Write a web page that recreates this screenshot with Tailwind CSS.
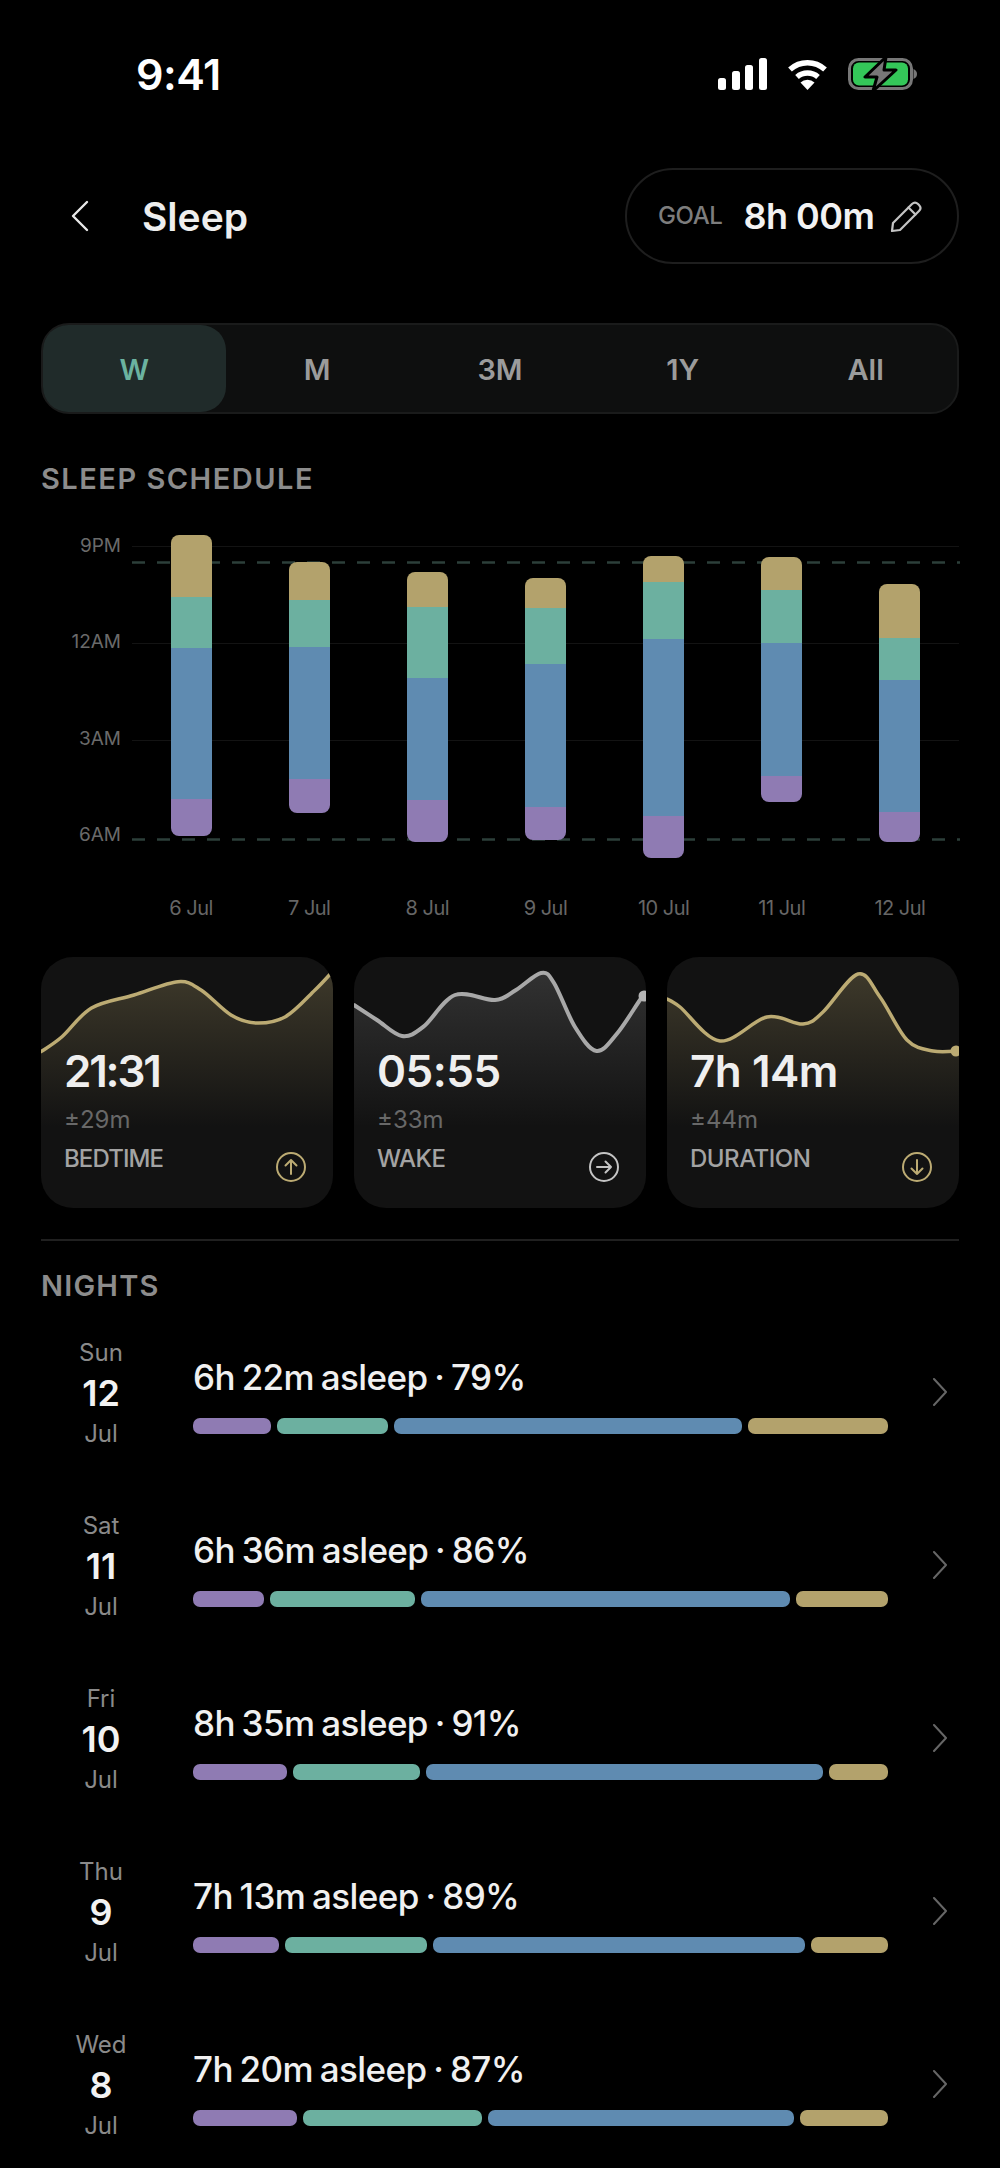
<!DOCTYPE html>
<html>
<head>
<meta charset="utf-8">
<script src="https://cdn.jsdelivr.net/npm/@tailwindcss/browser@4"></script>
</head>
<body class="bg-black">
<div class="w-[1000px] h-[2168px] overflow-hidden bg-black text-[#f0f0f0] font-['Inter',sans-serif]">

  <!-- status bar -->
  <div class="h-[148px] flex items-center justify-between pl-[136px] pr-[83px]">
    <span class="text-[43px] font-semibold leading-none text-white tracking-[-0.5px]">9:41</span>
    <div class="flex items-center gap-[20px]">
      <svg width="49" height="32" viewBox="0 0 49 32" fill="#fff"><rect x="0" y="20" width="8" height="12" rx="2.5"/><rect x="14" y="13" width="8" height="19" rx="2.5"/><rect x="27" y="7" width="8" height="25" rx="2.5"/><rect x="41" y="0" width="8" height="32" rx="2.5"/></svg>
      <svg width="41" height="32" viewBox="0 0 41 32" fill="none" stroke="#fff" stroke-linecap="butt"><path d="M3 11.5A26 26 0 0 1 38 11.5" stroke-width="5.5"/><path d="M10 19A16 16 0 0 1 31 19" stroke-width="5.5"/><path d="M13.5 24.5A10 10 0 0 1 27.5 24.5L20.5 32Z" fill="#fff" stroke="none"/></svg>
      <svg width="69" height="36" viewBox="0 0 69 36" fill="none"><rect x="1.5" y="3.5" width="62" height="29" rx="9" stroke="#777" stroke-width="3"/><rect x="5" y="6.5" width="55" height="23" rx="6" fill="#34c759"/><path d="M65.5 13C68 14 69 16 69 18S68 22 65.500 23Z" fill="#777"/><path d="M38 1 17 21H29L25 35 48 14H36Z" fill="#777" stroke="#000" stroke-width="3" stroke-linejoin="round"/></svg>
    </div>
  </div>

  <div class="px-[41px]">
    <!-- header -->
    <div class="mt-[20px] h-[96px] flex items-center justify-between">
      <div class="flex items-center">
        <svg class="ml-[29px]" width="20" height="32" viewBox="0 0 20 32" fill="none" stroke="#e8e8e8" stroke-width="2.4" stroke-linecap="round" stroke-linejoin="round"><path d="M17 2 3 16 17 30"/></svg>
        <span class="ml-[52px] text-[39px] font-semibold leading-none text-[#eeeeee]">Sleep</span>
      </div>
      <div class="w-[334px] h-[96px] rounded-full border-2 border-[#1e1e1e] flex items-center pl-[31px]">
        <span class="text-[24px] font-medium text-[#7d7d7d] tracking-[-0.4px] leading-none">GOAL</span>
        <span class="ml-[21px] text-[36px] font-semibold text-[#f2f2f2] leading-none tracking-[-0.5px]">8h 00m</span>
        <svg class="ml-[15px]" width="33" height="33" viewBox="0 0 33 33" fill="none" stroke="#c4c4c4" stroke-width="2.2" stroke-linejoin="round" stroke-linecap="round"><path d="M3 23 22 4Q25 1 28 4L29 5Q32 8 29 11L10 30 2 31Z"/><path d="M18.500 7.500 25.500 14.500"/></svg>
      </div>
    </div>

    <!-- range tabs -->
    <div class="mt-[59px] h-[91px] rounded-[28px] border-2 border-[#1a1b1b] bg-[#0e0f0f] grid grid-cols-5 items-stretch text-[29px] font-semibold text-[#9b9b9b]">
      <div class="rounded-[25px] bg-[#202b2a] text-[#6bb3a0] flex items-center justify-center pt-[2px]">W</div>
      <div class="flex items-center justify-center pt-[2px]">M</div>
      <div class="flex items-center justify-center pt-[2px]">3M</div>
      <div class="flex items-center justify-center pt-[2px]">1Y</div>
      <div class="flex items-center justify-center pt-[2px]">All</div>
    </div>

    <!-- schedule -->
    <div class="mt-[47px] h-[34px] flex items-center text-[29px] font-semibold tracking-[1.5px] text-[#8c8c8c] leading-none">SLEEP SCHEDULE</div>

    <div class="relative mt-[35px] h-[340px] pl-[91px]">
      <div class="absolute left-0 top-[6px] w-[80px] text-right text-[19px] leading-[20px] text-[#6a6a6a]">9PM</div>
      <div class="absolute left-0 top-[102px] w-[80px] text-right text-[19px] leading-[20px] text-[#6a6a6a]">12AM</div>
      <div class="absolute left-0 top-[199px] w-[80px] text-right text-[19px] leading-[20px] text-[#6a6a6a]">3AM</div>
      <div class="absolute left-0 top-[295px] w-[80px] text-right text-[19px] leading-[20px] text-[#6a6a6a]">6AM</div>

      <div class="absolute left-[91px] right-0 top-[16px] h-[1px] bg-[#131313]"></div>
      <div class="absolute left-[91px] right-0 top-[113px] h-[1px] bg-[#131313]"></div>
      <div class="absolute left-[91px] right-0 top-[210px] h-[1px] bg-[#131313]"></div>
      <svg class="absolute left-[91px] top-[31px]" width="828" height="3"><line x1="0" y1="1.500" x2="828" y2="1.500" stroke="#2c3f3a" stroke-width="2.500" stroke-dasharray="13 12"/></svg>
      <svg class="absolute left-[91px] top-[308px]" width="828" height="3"><line x1="0" y1="1.500" x2="828" y2="1.500" stroke="#2c3f3a" stroke-width="2.500" stroke-dasharray="13 12"/></svg>

      <div class="relative grid grid-cols-7 h-full">
        <div class="flex justify-center"><div class="w-[41px] self-start rounded-[8px] overflow-hidden flex flex-col" style="margin-top:5.3px"><div class="bg-[#b3a26c]" style="height:61.7px"></div><div class="bg-[#6cb0a0]" style="height:51.3px"></div><div class="bg-[#5f8bb1]" style="height:150.4px"></div><div class="bg-[#8f7bb3]" style="height:37px"></div></div></div>
        <div class="flex justify-center"><div class="w-[41px] self-start rounded-[8px] overflow-hidden flex flex-col" style="margin-top:31.7px"><div class="bg-[#b3a26c]" style="height:38.3px"></div><div class="bg-[#6cb0a0]" style="height:46.7px"></div><div class="bg-[#5f8bb1]" style="height:132.6px"></div><div class="bg-[#8f7bb3]" style="height:34px"></div></div></div>
        <div class="flex justify-center"><div class="w-[41px] self-start rounded-[8px] overflow-hidden flex flex-col" style="margin-top:41.7px"><div class="bg-[#b3a26c]" style="height:35px"></div><div class="bg-[#6cb0a0]" style="height:71.3px"></div><div class="bg-[#5f8bb1]" style="height:122px"></div><div class="bg-[#8f7bb3]" style="height:41.7px"></div></div></div>
        <div class="flex justify-center"><div class="w-[41px] self-start rounded-[8px] overflow-hidden flex flex-col" style="margin-top:48.3px"><div class="bg-[#b3a26c]" style="height:30px"></div><div class="bg-[#6cb0a0]" style="height:55.4px"></div><div class="bg-[#5f8bb1]" style="height:143.3px"></div><div class="bg-[#8f7bb3]" style="height:32.7px"></div></div></div>
        <div class="flex justify-center"><div class="w-[41px] self-start rounded-[8px] overflow-hidden flex flex-col" style="margin-top:25.7px"><div class="bg-[#b3a26c]" style="height:26.3px"></div><div class="bg-[#6cb0a0]" style="height:57px"></div><div class="bg-[#5f8bb1]" style="height:177px"></div><div class="bg-[#8f7bb3]" style="height:42px"></div></div></div>
        <div class="flex justify-center"><div class="w-[41px] self-start rounded-[8px] overflow-hidden flex flex-col" style="margin-top:27px"><div class="bg-[#b3a26c]" style="height:33.3px"></div><div class="bg-[#6cb0a0]" style="height:52.7px"></div><div class="bg-[#5f8bb1]" style="height:133px"></div><div class="bg-[#8f7bb3]" style="height:26px"></div></div></div>
        <div class="flex justify-center"><div class="w-[41px] self-start rounded-[8px] overflow-hidden flex flex-col" style="margin-top:54.3px"><div class="bg-[#b3a26c]" style="height:53.7px"></div><div class="bg-[#6cb0a0]" style="height:42px"></div><div class="bg-[#5f8bb1]" style="height:132.3px"></div><div class="bg-[#8f7bb3]" style="height:30px"></div></div></div>
      </div>
    </div>
    <div class="mt-[26px] ml-[91px] grid grid-cols-7 text-center text-[20px] leading-[24px] text-[#666666] tracking-[-0.5px]">
      <div>6 Jul</div><div>7 Jul</div><div>8 Jul</div><div>9 Jul</div><div>10 Jul</div><div>11 Jul</div><div>12 Jul</div>
    </div>

    <!-- stat cards -->
    <div class="mt-[37px] grid grid-cols-3 gap-[21px]">
      <div class="relative h-[251px] rounded-[32px] overflow-hidden bg-[#121212]">
        <svg class="absolute left-0 top-0" width="292" height="251" viewBox="0 0 292 251" fill="none">
          <defs><linearGradient id="g1" x1="0" y1="0" x2="0" y2="1"><stop offset="0" stop-color="#b3a26c" stop-opacity="0.27"/><stop offset="1" stop-color="#b3a26c" stop-opacity="0"/></linearGradient></defs>
          <path data-pts="0,94.700 21,79.700 50.500,51 93,38 137,24.700 160,33 190,58 215,66 244.500,59.700 274,33 292,14" data-fill="1" fill="url(#g1)"/>
          <path data-pts="0,94.700 21,79.700 50.500,51 93,38 137,24.700 160,33 190,58 215,66 244.500,59.700 274,33 292,14" stroke="#bcab73" stroke-width="3.500" stroke-linecap="round"/>
        </svg>
        <div class="relative pl-[23px] pt-[90px]">
          <div class="text-[44px] leading-[48px] font-semibold text-[#efefef] tracking-[-2.2px]">21:31</div>
          <div class="mt-[11px] text-[24px] leading-[28px] text-[#686868]">±29m</div>
          <div class="mt-[11px] text-[24px] leading-[28px] font-medium text-[#a3a3a3] tracking-[-0.9px]">BEDTIME</div>
        </div>
        <svg class="absolute right-[27px] top-[195px]" width="30" height="30" viewBox="0 0 30 30" fill="none" stroke="#bcab73" stroke-width="2" stroke-linecap="round" stroke-linejoin="round"><circle cx="15" cy="15" r="14"/><path d="M15 22V8M9.500 13.500 15 8l5.500 5.500"/></svg>
      </div>

      <div class="relative h-[251px] rounded-[32px] overflow-hidden bg-[#121212]">
        <svg class="absolute left-0 top-0" width="292" height="251" viewBox="0 0 292 251" fill="none">
          <defs><linearGradient id="g2" x1="0" y1="0" x2="0" y2="1"><stop offset="0" stop-color="#b0b0b0" stop-opacity="0.2"/><stop offset="1" stop-color="#b0b0b0" stop-opacity="0"/></linearGradient></defs>
          <path data-pts="0,48 23,63 48,79 69.500,69.700 101,38 141,43 162,33 187,16 200,26 221,70 242.500,94 263.500,76 288,40 292,38" data-fill="1" fill="url(#g2)"/>
          <path data-pts="0,48 23,63 48,79 69.500,69.700 101,38 141,43 162,33 187,16 200,26 221,70 242.500,94 263.500,76 288,40 292,38" stroke="#a8a8a8" stroke-width="4" stroke-linecap="round"/>
          <circle cx="290" cy="39" r="5.500" fill="#b4b4b4"/>
        </svg>
        <div class="relative pl-[23px] pt-[90px]">
          <div class="text-[44px] leading-[48px] font-semibold text-[#efefef] tracking-[-0.5px]">05:55</div>
          <div class="mt-[11px] text-[24px] leading-[28px] text-[#686868]">±33m</div>
          <div class="mt-[11px] text-[24px] leading-[28px] font-medium text-[#a3a3a3] tracking-[-0.5px]">WAKE</div>
        </div>
        <svg class="absolute right-[27px] top-[195px]" width="30" height="30" viewBox="0 0 30 30" fill="none" stroke="#c4c4c4" stroke-width="2" stroke-linecap="round" stroke-linejoin="round"><circle cx="15" cy="15" r="14"/><path d="M8 15H22M16.500 9.500 22 15l-5.500 5.500"/></svg>
      </div>

      <div class="relative h-[251px] rounded-[32px] overflow-hidden bg-[#121212]">
        <svg class="absolute left-0 top-0" width="292" height="251" viewBox="0 0 292 251" fill="none">
          <defs><linearGradient id="g3" x1="0" y1="0" x2="0" y2="1"><stop offset="0" stop-color="#b3a26c" stop-opacity="0.27"/><stop offset="1" stop-color="#b3a26c" stop-opacity="0"/></linearGradient></defs>
          <path data-pts="0,42 13,50 53,84 100,60 136,67 156,55 191,17 213,40 240,83 266,94 292,94" data-fill="1" fill="url(#g3)"/>
          <path data-pts="0,42 13,50 53,84 100,60 136,67 156,55 191,17 213,40 240,83 266,94 292,94" stroke="#bcab73" stroke-width="3.500" stroke-linecap="round"/>
          <circle cx="289" cy="94" r="5.500" fill="#bcab73"/>
        </svg>
        <div class="relative pl-[23px] pt-[90px]">
          <div class="text-[44px] leading-[48px] font-semibold text-[#efefef] tracking-[-0.5px]">7h 14m</div>
          <div class="mt-[11px] text-[24px] leading-[28px] text-[#686868]">±44m</div>
          <div class="mt-[11px] text-[24px] leading-[28px] font-medium text-[#a3a3a3] tracking-[-0.5px]">DURATION</div>
        </div>
        <svg class="absolute right-[27px] top-[195px]" width="30" height="30" viewBox="0 0 30 30" fill="none" stroke="#bcab73" stroke-width="2" stroke-linecap="round" stroke-linejoin="round"><circle cx="15" cy="15" r="14"/><path d="M15 8V22M9.500 16.500 15 22l5.500-5.500"/></svg>
      </div>
    </div>

    <div class="mt-[31px] h-[2px] bg-[#202020]"></div>

    <div class="mt-[30px] h-[28px] flex items-center text-[29px] font-semibold tracking-[1.2px] text-[#8c8c8c] leading-none">NIGHTS</div>

    <!-- nights -->
    <div class="mt-[41px] flex flex-col">
      <div class="h-[173px] flex items-start">
        <div class="w-[120px] text-center"><div class="text-[24px] leading-[28px] text-[#8a8a8a] -mt-[1px]">Sun</div><div class="mt-[6px] text-[36px] leading-[40px] font-semibold text-[#f2f2f2]">12</div><div class="mt-[7px] text-[24px] leading-[28px] text-[#8a8a8a]">Jul</div></div>
        <div class="ml-[32px] w-[695px] pt-[17px]"><div class="text-[35px] leading-[40px] font-medium text-[#f0f0f0] tracking-[-0.6px] [word-spacing:-2px]">6h 22m asleep · 79%</div><div class="mt-[21px] flex gap-[6px] h-[16px]"><div class="rounded-[7px] bg-[#8f7bb3]" style="flex:78"></div><div class="rounded-[7px] bg-[#6cb0a0]" style="flex:111"></div><div class="rounded-[7px] bg-[#5f8bb1]" style="flex:348"></div><div class="rounded-[7px] bg-[#b3a26c]" style="flex:140"></div></div></div>
        <svg class="ml-[44px] mt-[38px]" width="16" height="28" viewBox="0 0 16 28" fill="none" stroke="#666666" stroke-width="2" stroke-linecap="round" stroke-linejoin="round"><path d="M2 1 14 14 2 27"/></svg>
      </div>
      <div class="h-[173px] flex items-start">
        <div class="w-[120px] text-center"><div class="text-[24px] leading-[28px] text-[#8a8a8a] -mt-[1px]">Sat</div><div class="mt-[6px] text-[36px] leading-[40px] font-semibold text-[#f2f2f2]">11</div><div class="mt-[7px] text-[24px] leading-[28px] text-[#8a8a8a]">Jul</div></div>
        <div class="ml-[32px] w-[695px] pt-[17px]"><div class="text-[35px] leading-[40px] font-medium text-[#f0f0f0] tracking-[-0.6px] [word-spacing:-2px]">6h 36m asleep · 86%</div><div class="mt-[21px] flex gap-[6px] h-[16px]"><div class="rounded-[7px] bg-[#8f7bb3]" style="flex:71"></div><div class="rounded-[7px] bg-[#6cb0a0]" style="flex:145"></div><div class="rounded-[7px] bg-[#5f8bb1]" style="flex:370"></div><div class="rounded-[7px] bg-[#b3a26c]" style="flex:92"></div></div></div>
        <svg class="ml-[44px] mt-[38px]" width="16" height="28" viewBox="0 0 16 28" fill="none" stroke="#666666" stroke-width="2" stroke-linecap="round" stroke-linejoin="round"><path d="M2 1 14 14 2 27"/></svg>
      </div>
      <div class="h-[173px] flex items-start">
        <div class="w-[120px] text-center"><div class="text-[24px] leading-[28px] text-[#8a8a8a] -mt-[1px]">Fri</div><div class="mt-[6px] text-[36px] leading-[40px] font-semibold text-[#f2f2f2]">10</div><div class="mt-[7px] text-[24px] leading-[28px] text-[#8a8a8a]">Jul</div></div>
        <div class="ml-[32px] w-[695px] pt-[17px]"><div class="text-[35px] leading-[40px] font-medium text-[#f0f0f0] tracking-[-0.6px] [word-spacing:-2px]">8h 35m asleep · 91%</div><div class="mt-[21px] flex gap-[6px] h-[16px]"><div class="rounded-[7px] bg-[#8f7bb3]" style="flex:94"></div><div class="rounded-[7px] bg-[#6cb0a0]" style="flex:127"></div><div class="rounded-[7px] bg-[#5f8bb1]" style="flex:397"></div><div class="rounded-[7px] bg-[#b3a26c]" style="flex:59"></div></div></div>
        <svg class="ml-[44px] mt-[38px]" width="16" height="28" viewBox="0 0 16 28" fill="none" stroke="#666666" stroke-width="2" stroke-linecap="round" stroke-linejoin="round"><path d="M2 1 14 14 2 27"/></svg>
      </div>
      <div class="h-[173px] flex items-start">
        <div class="w-[120px] text-center"><div class="text-[24px] leading-[28px] text-[#8a8a8a] -mt-[1px]">Thu</div><div class="mt-[6px] text-[36px] leading-[40px] font-semibold text-[#f2f2f2]">9</div><div class="mt-[7px] text-[24px] leading-[28px] text-[#8a8a8a]">Jul</div></div>
        <div class="ml-[32px] w-[695px] pt-[17px]"><div class="text-[35px] leading-[40px] font-medium text-[#f0f0f0] tracking-[-0.6px] [word-spacing:-2px]">7h 13m asleep · 89%</div><div class="mt-[21px] flex gap-[6px] h-[16px]"><div class="rounded-[7px] bg-[#8f7bb3]" style="flex:86"></div><div class="rounded-[7px] bg-[#6cb0a0]" style="flex:142"></div><div class="rounded-[7px] bg-[#5f8bb1]" style="flex:372"></div><div class="rounded-[7px] bg-[#b3a26c]" style="flex:77"></div></div></div>
        <svg class="ml-[44px] mt-[38px]" width="16" height="28" viewBox="0 0 16 28" fill="none" stroke="#666666" stroke-width="2" stroke-linecap="round" stroke-linejoin="round"><path d="M2 1 14 14 2 27"/></svg>
      </div>
      <div class="h-[173px] flex items-start">
        <div class="w-[120px] text-center"><div class="text-[24px] leading-[28px] text-[#8a8a8a] -mt-[1px]">Wed</div><div class="mt-[6px] text-[36px] leading-[40px] font-semibold text-[#f2f2f2]">8</div><div class="mt-[7px] text-[24px] leading-[28px] text-[#8a8a8a]">Jul</div></div>
        <div class="ml-[32px] w-[695px] pt-[17px]"><div class="text-[35px] leading-[40px] font-medium text-[#f0f0f0] tracking-[-0.6px] [word-spacing:-2px]">7h 20m asleep · 87%</div><div class="mt-[21px] flex gap-[6px] h-[16px]"><div class="rounded-[7px] bg-[#8f7bb3]" style="flex:104"></div><div class="rounded-[7px] bg-[#6cb0a0]" style="flex:180"></div><div class="rounded-[7px] bg-[#5f8bb1]" style="flex:307"></div><div class="rounded-[7px] bg-[#b3a26c]" style="flex:88"></div></div></div>
        <svg class="ml-[44px] mt-[38px]" width="16" height="28" viewBox="0 0 16 28" fill="none" stroke="#666666" stroke-width="2" stroke-linecap="round" stroke-linejoin="round"><path d="M2 1 14 14 2 27"/></svg>
      </div>
    </div>
  </div>
</div>
<script>
document.querySelectorAll('path[data-pts]').forEach(function (el) {
  var p = el.getAttribute('data-pts').trim().split(/\s+/).map(function (s) { return s.split(',').map(Number); });
  var d = 'M' + p[0][0] + ' ' + p[0][1];
  for (var i = 0; i < p.length - 1; i++) {
    var a = p[Math.max(i - 1, 0)], b = p[i], c = p[i + 1], e = p[Math.min(i + 2, p.length - 1)];
    d += 'C' + (b[0] + (c[0] - a[0]) / 6) + ' ' + (b[1] + (c[1] - a[1]) / 6) + ' ' + (c[0] - (e[0] - b[0]) / 6) + ' ' + (c[1] - (e[1] - b[1]) / 6) + ' ' + c[0] + ' ' + c[1];
  }
  if (el.hasAttribute('data-fill')) { d += 'L292 170L0 170Z'; }
  el.setAttribute('d', d);
});
</script>
</body>
</html>
